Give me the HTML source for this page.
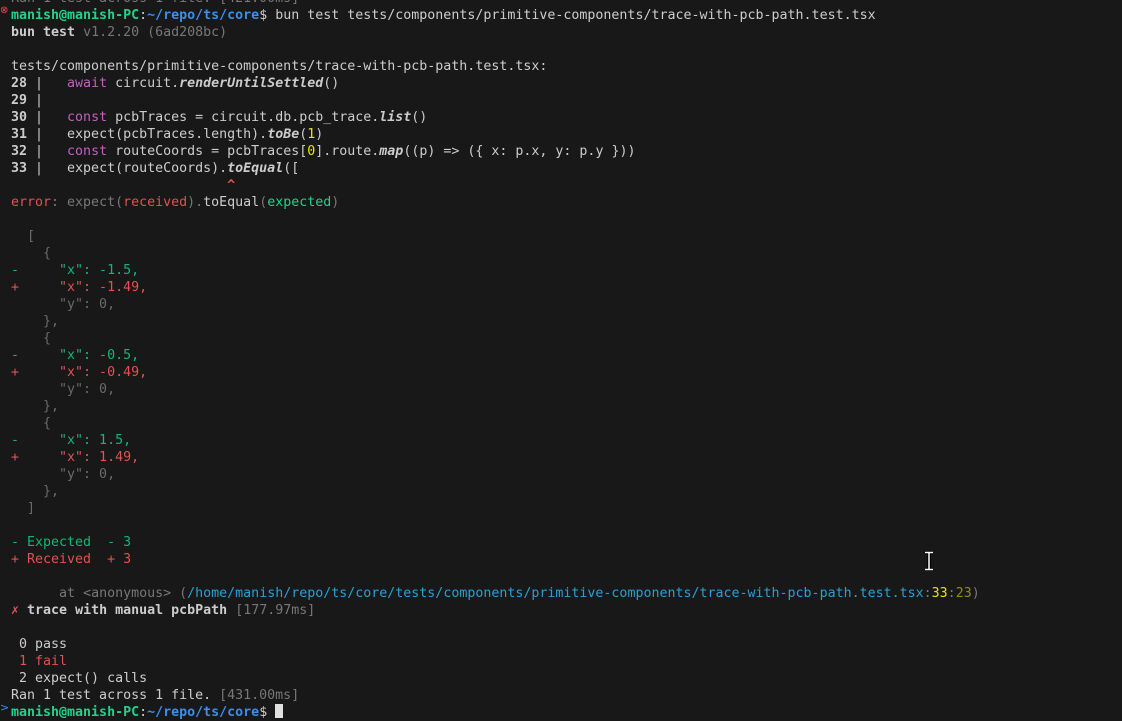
<!DOCTYPE html>
<html><head><meta charset="utf-8"><style>
html,body{margin:0;padding:0;background:#181818;width:1122px;height:714px;overflow:hidden}
pre{position:absolute;left:11px;top:-10.5px;margin:0;font-family:"DejaVu Sans Mono","Liberation Mono",monospace;font-size:13.3px;line-height:17px;color:#cccccc;white-space:pre}
.g{color:#23d18b}.gb{color:#23d18b;font-weight:bold}.bl{color:#3b8eea;font-weight:bold}
.b{font-weight:bold}.d{color:#777}.dm{color:#6a6a6a}.kw{color:#c061c0}.it{font-weight:bold;font-style:italic}
.y{color:#e5e510}.yd{color:#8c8c22}.r{color:#e05252}.gr{color:#17b47a}.p{color:#2b9fd4}
.cur{display:inline-block;width:8px;height:14px;background:#e0e0e0;vertical-align:-2px}
.ico{position:absolute;left:0;top:5px;color:#e05252;font-size:10px;font-family:"DejaVu Sans",sans-serif}
.ico2{position:absolute;left:0;top:701px;color:#3b8eea;font-size:11px;font-family:"DejaVu Sans",sans-serif}
</style></head><body>
<div class="ico">⊗</div>
<div class="ico2">&gt;</div>
<svg style="position:absolute;left:923px;top:551px" width="12" height="20" viewBox="0 0 12 20"><path d="M2 1.5h8M2 18.5h8M6 1.5v17" stroke="#000" stroke-width="3.5" fill="none"/><path d="M2 1.5h8M2 18.5h8M6 1.5v17" stroke="#fff" stroke-width="1.5" fill="none"/></svg>
<pre><span class="d">Ran 1 test across 1 file. [421.00ms]</span>
<span class="gb">manish@manish-PC</span>:<span class="bl">~/repo/ts/core</span>$ bun test tests/components/primitive-components/trace-with-pcb-path.test.tsx
<span class="b">bun test</span> <span class="d">v1.2.20 (6ad208bc)</span>

tests/components/primitive-components/trace-with-pcb-path.test.tsx:
<span class="b">28</span> |   <span class="kw">await</span> circuit.<span class="it">renderUntilSettled</span>()
<span class="b">29</span> |
<span class="b">30</span> |   <span class="kw">const</span> pcbTraces = circuit.db.pcb_trace.<span class="it">list</span>()
<span class="b">31</span> |   expect(pcbTraces.length).<span class="it">toBe</span>(<span class="y">1</span>)
<span class="b">32</span> |   <span class="kw">const</span> routeCoords = pcbTraces[<span class="y">0</span>].route.<span class="it">map</span>((p) =&gt; ({ x: p.x, y: p.y }))
<span class="b">33</span> |   expect(routeCoords).<span class="it">toEqual</span>([
                           <span class="r b">^</span>
<span class="r">error</span><span class="d">: expect(</span><span class="r">received</span><span class="d">).</span>toEqual<span class="d">(</span><span class="g">expected</span><span class="d">)</span>

  <span class="dm">[</span>
    <span class="dm">{</span>
<span class="gr">-     "x": -1.5,</span>
<span class="r">+     "x": -1.49,</span>
<span class="dm">      "y": 0,</span>
<span class="dm">    },</span>
<span class="dm">    {</span>
<span class="gr">-     "x": -0.5,</span>
<span class="r">+     "x": -0.49,</span>
<span class="dm">      "y": 0,</span>
<span class="dm">    },</span>
<span class="dm">    {</span>
<span class="gr">-     "x": 1.5,</span>
<span class="r">+     "x": 1.49,</span>
<span class="dm">      "y": 0,</span>
<span class="dm">    },</span>
<span class="dm">  ]</span>

<span class="gr">- Expected  - 3</span>
<span class="r">+ Received  + 3</span>

      <span class="d">at &lt;anonymous&gt; (</span><span class="p">/home/manish/repo/ts/core/tests/components/primitive-components/trace-with-pcb-path.test.tsx</span><span class="d">:</span><span class="y">33</span><span class="d">:</span><span class="yd">23</span><span class="d">)</span>
<span class="r">✗</span> <span class="b">trace with manual pcbPath</span> <span class="d">[177.97ms]</span>

 0 pass
 <span class="r">1 fail</span>
 2 expect() calls
Ran 1 test across 1 file. <span class="d">[431.00ms]</span>
<span class="gb">manish@manish-PC</span>:<span class="bl">~/repo/ts/core</span>$ <span class="cur"></span></pre>
</body></html>
